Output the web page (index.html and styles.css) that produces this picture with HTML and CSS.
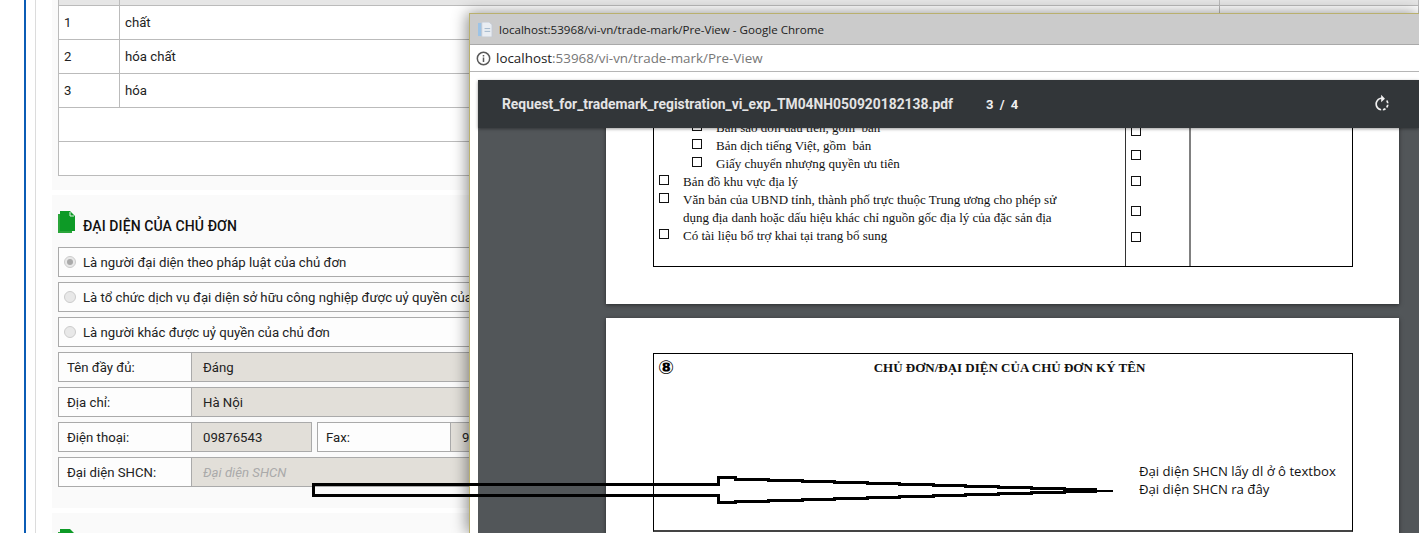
FILE: index.html
```html
<!DOCTYPE html>
<html lang="vi">

<head>
    <meta charset="UTF-8">
    <meta name="viewport" content="width=device-width, initial-scale=1.0">
    <title>Trade mark</title>
    <link rel="stylesheet" href="styles.css">
</head>

<body>
    <div class="rail">
        <div class="content">
            <section class="panel panel-table">
                <table class="words">
                    <thead>
                        <tr>
                            <th class="col-no"></th>
                            <th class="col-word"></th>
                            <th></th>
                        </tr>
                    </thead>
                    <tbody>
                        <tr><td>1</td><td>chất</td><td></td></tr>
                        <tr><td>2</td><td>hóa chất</td><td></td></tr>
                        <tr><td>3</td><td>hóa</td><td></td></tr>
                        <tr><td colspan="3"></td></tr>
                        <tr><td colspan="3"></td></tr>
                    </tbody>
                </table>
            </section>

            <section class="panel panel-form">
                <h2 class="section-title">
                    <svg class="doc-icon" viewBox="0 0 17 22">
                        <path d="M0 3h2v17h12v2H0z" fill="#2aa53a" />
                        <path d="M2 0h10l5 5v15H2z" fill="#0d9a26" />
                        <path d="M12 1v4h4" fill="none" stroke="#dff3e2" stroke-width="1" />
                    </svg>
                    ĐẠI DIỆN CỦA CHỦ ĐƠN
                </h2>
                <div class="radio-row"><span class="radio checked"></span>Là người đại diện theo pháp luật của chủ đơn</div>
                <div class="radio-row"><span class="radio"></span>Là tổ chức dịch vụ đại diện sở hữu công nghiệp được uỷ quyền của chủ đơn</div>
                <div class="radio-row"><span class="radio"></span>Là người khác được uỷ quyền của chủ đơn</div>
                <div class="field">
                    <label class="field-label">Tên đầy đủ:</label>
                    <div class="field-value">Đáng</div>
                </div>
                <div class="field">
                    <label class="field-label">Địa chỉ:</label>
                    <div class="field-value">Hà Nội</div>
                </div>
                <div class="field-pair">
                    <div class="field field-phone">
                        <label class="field-label">Điện thoại:</label>
                        <div class="field-value">09876543</div>
                    </div>
                    <div class="field">
                        <label class="field-label">Fax:</label>
                        <div class="field-value">9</div>
                    </div>
                </div>
                <div class="field">
                    <label class="field-label">Đại diện SHCN:</label>
                    <div class="field-value placeholder">Đại diện SHCN</div>
                </div>
            </section>

            <section class="panel panel-next">
                <h2 class="section-title">
                    <svg class="doc-icon" viewBox="0 0 17 22">
                        <path d="M0 3h2v17h12v2H0z" fill="#2aa53a" />
                        <path d="M2 0h10l5 5v15H2z" fill="#0d9a26" />
                    </svg>
                </h2>
            </section>
        </div>
    </div>

    <div class="popup">
        <div class="popup-title">
            <svg class="favicon" viewBox="0 0 16 16">
                <path d="M0 1h9v14H0z" fill="#9cc3e6" />
                <path d="M4 0h8l3 3v13H4z" fill="#e9edf2" stroke="#c2c9d2" stroke-width="1" />
                <path d="M7 7h6M7 10h6" stroke="#9fb4c9" stroke-width="1" />
            </svg>
            localhost:53968/vi-vn/trade-mark/Pre-View - Google Chrome
        </div>
        <div class="popup-address">
            <svg class="info-icon" viewBox="0 0 16 16">
                <circle cx="8" cy="8" r="6.6" fill="none" stroke="#5a5a5a" stroke-width="1.6" />
                <path d="M7.2 7h1.6v4.6H7.2zM7.2 4.2h1.6v1.6H7.2z" fill="#5a5a5a" />
            </svg>
            <span class="host">localhost</span><span class="url-rest">:53968/vi-vn/trade-mark/Pre-View</span>
        </div>
        <div class="viewer">
            <div class="viewer-bar">
                <span class="file-name">Request_for_trademark_registration_vi_exp_TM04NH050920182138.pdf</span>
                <span class="page-count">3 / 4</span>
                <svg class="rotate-icon" viewBox="0 0 24 24">
                    <path fill="#f1f1f1" d="M15.55 5.55L11 1v3.07C7.06 4.56 4 7.92 4 12s3.05 7.44 7 7.93v-2.02c-2.84-.48-5-2.94-5-5.91s2.16-5.43 5-5.91V10l4.55-4.45zM19.93 11c-.17-1.39-.72-2.73-1.62-3.89l-1.42 1.42c.54.75.88 1.6 1.02 2.47h2.02zM13 17.9v2.02c1.39-.17 2.74-.71 3.9-1.61l-1.44-1.44c-.75.54-1.59.89-2.46 1.03zm3.89-2.42l1.42 1.41c.9-1.16 1.45-2.5 1.62-3.89h-2.02c-.14.87-.48 1.72-1.02 2.48z" />
                </svg>
            </div>
            <div class="pdf-scroll">
                <div class="pdf-page pdf-page-first">
                    <div class="pdf-table">
                        <div class="pdf-cell pdf-list">
                            <div class="pdf-line sub"><span class="box"></span>Bản sao đơn đầu tiên, gồm&nbsp; bản</div>
                            <div class="pdf-line sub"><span class="box"></span>Bản dịch tiếng Việt, gồm&nbsp; bản</div>
                            <div class="pdf-line sub"><span class="box"></span>Giấy chuyển nhượng quyền ưu tiên</div>
                            <div class="pdf-line"><span class="box"></span>Bản đồ khu vực địa lý</div>
                            <div class="pdf-line"><span class="box"></span>Văn bản của UBND tỉnh, thành phố trực thuộc Trung ương cho phép sử</div>
                            <div class="pdf-line"><span class="box box-empty"></span>dụng địa danh hoặc dấu hiệu khác chỉ nguồn gốc địa lý của đặc sản địa</div>
                            <div class="pdf-line"><span class="box"></span>Có tài liệu bổ trợ khai tại trang bổ sung</div>
                        </div>
                        <div class="pdf-cell pdf-marks">
                            <span class="box"></span>
                            <span class="box"></span>
                            <span class="box"></span>
                            <span class="box"></span>
                            <span class="box"></span>
                        </div>
                        <div class="pdf-cell pdf-last"></div>
                    </div>
                </div>
                <div class="pdf-page pdf-page-second">
                    <div class="sign-table">
                        <span class="sign-no">⑧</span>
                        <span class="sign-title">CHỦ ĐƠN/ĐẠI DIỆN CỦA CHỦ ĐƠN KÝ TÊN</span>
                    </div>
                </div>
            </div>
        </div>
    </div>

    <!-- note drawn on top of the screenshot -->
    <svg class="arrow" viewBox="0 0 1419 533">
        <path d="M1097 489.5H1064V488.5H1031V487.5H998V486.5H965V485.5H933V484.5H899V483.5H867V482.5H834V481.5H802V480.5H768V479.5H735V477.5H718.5V484.5H313.5V495.5H718.5V502.5H735V501.5H768V500.5H802V499.5H834V498.5H867V497.5H899V496.5H933V495.5H965V494.5H998V493.5H1031V492.5H1064V491.5H1097" fill="none" stroke="#000" stroke-width="3" shape-rendering="crispEdges" />
        <path d="M1064 490.5H1113" fill="none" stroke="#000" stroke-width="2" shape-rendering="crispEdges" />
    </svg>
    <div class="note">Đại diện SHCN lấy dl ở ô textbox<br>Đại diện SHCN ra đây</div>
</body>

</html>
```

FILE: styles.css
```css
html, body {
    margin: 0;
    height: 533px;
    overflow: hidden;
    background: #fff;
}

body {
    font-family: Roboto, Arial, sans-serif;
    font-size: 13.2px;
    color: #222;
}

.rail {
    margin-left: 24px;
    padding-left: 9px;
    border-left: 2px solid #0b5cb5;
    height: 533px;
    overflow: hidden;
}

.content {
    border-left: 1px solid #dcdcdc;
    padding-left: 16px;
    height: 562px;
    margin-top: -29px;
}

.panel {
    background: #fafafa;
    padding-left: 6px;
    margin-bottom: 5px;
}

.panel-table {
    padding-bottom: 14px;
}

.panel-form {
    padding-top: 16px;
    padding-bottom: 16px;
}

.panel-next {
    padding-top: 16px;
}

.words {
    width: 100%;
    table-layout: fixed;
    border-collapse: collapse;
    background: #fff;
}

.words th,
.words td {
    height: 33px;
    padding: 0 5px;
    border: 1px solid #bbb;
    text-align: left;
    font-weight: normal;
}

.words th {
    background: #e6e6e6;
}

.col-no {
    width: 50px;
}

.col-word {
    width: 1089px;
}

.section-title {
    display: flex;
    align-items: flex-end;
    gap: 8px;
    height: 22px;
    margin: 0 0 14px;
    font-size: 14px;
    font-weight: 500;
    line-height: 13px;
    letter-spacing: 0.1px;
    color: #111;
}

.doc-icon {
    width: 17px;
    height: 22px;
    flex: none;
}

.radio-row {
    display: flex;
    align-items: center;
    height: 28px;
    margin-bottom: 5px;
    padding-left: 5px;
    border: 1px solid #aaa;
    background: #fdfdfd;
}

.radio {
    width: 10px;
    height: 10px;
    margin-right: 7px;
    border: 1px solid #ccc;
    border-radius: 50%;
    background: #e8e8e8;
    position: relative;
}

.radio.checked::after {
    content: "";
    position: absolute;
    left: 2px;
    top: 2px;
    width: 6px;
    height: 6px;
    border-radius: 50%;
    background: #aaa;
}

.field {
    display: flex;
    flex: 1;
    height: 28px;
    margin-bottom: 5px;
    border: 1px solid #aaa;
    background: #fdfdfd;
    line-height: 30px;
}

.field-label {
    width: 124px;
    flex: none;
    padding-left: 8px;
    border-right: 1px solid #aaa;
}

.field-value {
    flex: 1;
    padding-left: 11px;
    background: #e2dfd9;
}

.placeholder {
    color: #aaa;
    font-style: italic;
}

.field-pair {
    display: flex;
    gap: 5px;
}

.field-phone {
    flex: none;
    width: 252px;
}

.popup {
    position: absolute;
    left: 469px;
    top: 13px;
    right: 0;
    bottom: 0;
    display: flex;
    flex-direction: column;
    background: #fff;
    border: 1px solid #b9b06e;
    border-width: 1px 0 0 1px;
    box-shadow: -2px 0 14px rgba(0, 0, 0, 0.45);
}

.popup-title {
    display: flex;
    align-items: center;
    height: 30px;
    padding-left: 8px;
    background: #cbcbcb;
    border-bottom: 1px solid #a9a9a9;
    font-family: "Open Sans", sans-serif;
    font-size: 11.6px;
    color: #222;
}

.favicon {
    width: 15px;
    height: 15px;
    margin-right: 6px;
}

.popup-address {
    display: flex;
    align-items: center;
    height: 26px;
    padding-left: 6px;
    border-bottom: 1px solid #b5b5b5;
    font-family: "Open Sans", sans-serif;
    font-size: 13.4px;
}

.info-icon {
    width: 15px;
    height: 15px;
    margin-right: 5px;
}

.host {
    color: #222;
}

.url-rest {
    color: #777;
}

.viewer {
    flex: 1;
    min-height: 0;
    margin: 8px 0 0 8px;
    display: flex;
    flex-direction: column;
    background: #525659;
}

.viewer-bar {
    position: relative;
    z-index: 2;
    flex: none;
    display: flex;
    align-items: center;
    height: 48px;
    padding-left: 24px;
    background: #323639;
    box-shadow: 0 1px 3px rgba(0, 0, 0, 0.4);
    color: #f1f1f1;
}

.file-name {
    font-size: 13.85px;
    font-weight: 700;
    color: #e4e4e4;
}

.page-count {
    margin-left: 33px;
    font-size: 13px;
    font-weight: 700;
    letter-spacing: 1.5px;
}

.rotate-icon {
    width: 20px;
    height: 20px;
    margin-left: auto;
    margin-right: 27px;
}

.pdf-scroll {
    flex: 1;
    min-height: 0;
    overflow: hidden;
    padding: 0 20px 0 128px;
}

.pdf-page {
    background: #fff;
    box-shadow: 0 1px 4px rgba(0, 0, 0, 0.5);
    padding-left: 47px;
    padding-right: 46px;
}

.pdf-page-first {
    margin-top: -40px;
    padding-top: 20px;
    padding-bottom: 37px;
    margin-bottom: 14px;
}

.pdf-page-second {
    padding-top: 35px;
    height: 300px;
}

.pdf-table {
    display: grid;
    grid-template-columns: 471px 64px 1fr;
    border: 1px solid #000;
    font-family: "Liberation Serif", serif;
    font-size: 13px;
    color: #111;
}

.pdf-cell + .pdf-cell {
    border-left: 1px solid #333;
}

.pdf-cell.pdf-last {
    border-left: 2px solid #808080;
}

.pdf-list {
    padding: 10px 0 21px 5px;
}

.pdf-line {
    display: flex;
    align-items: flex-start;
    height: 18px;
    line-height: 18px;
    white-space: nowrap;
}

.pdf-line.sub {
    padding-left: 33px;
}

.box {
    flex: none;
    width: 8px;
    height: 8px;
    margin: 2px 14px 0 0;
    border: 1px solid #111;
}

.box-empty {
    visibility: hidden;
}

.pdf-marks {
    display: grid;
    grid-template-rows: 24px 26px 30px 26px 24px;
    padding: 15px 0 0 5px;
}

.sign-table {
    position: relative;
    height: 176px;
    border: 1px solid #000;
    border-bottom: 2px solid #444;
    font-family: "Liberation Serif", serif;
    text-align: center;
}

.sign-no {
    position: absolute;
    left: 4px;
    top: 2px;
    font-family: "DejaVu Sans", sans-serif;
    font-size: 19px;
    font-weight: 700;
    color: #000;
}

.sign-title {
    display: block;
    padding: 6px 0 0 13px;
    font-size: 13px;
    font-weight: 700;
    color: #111;
}

.arrow {
    position: absolute;
    left: 0;
    top: 0;
    width: 1419px;
    height: 533px;
    pointer-events: none;
}

.note {
    position: absolute;
    left: 1139px;
    top: 462px;
    font-family: "Open Sans", sans-serif;
    font-size: 13.15px;
    line-height: 18px;
    color: #111;
}
```
